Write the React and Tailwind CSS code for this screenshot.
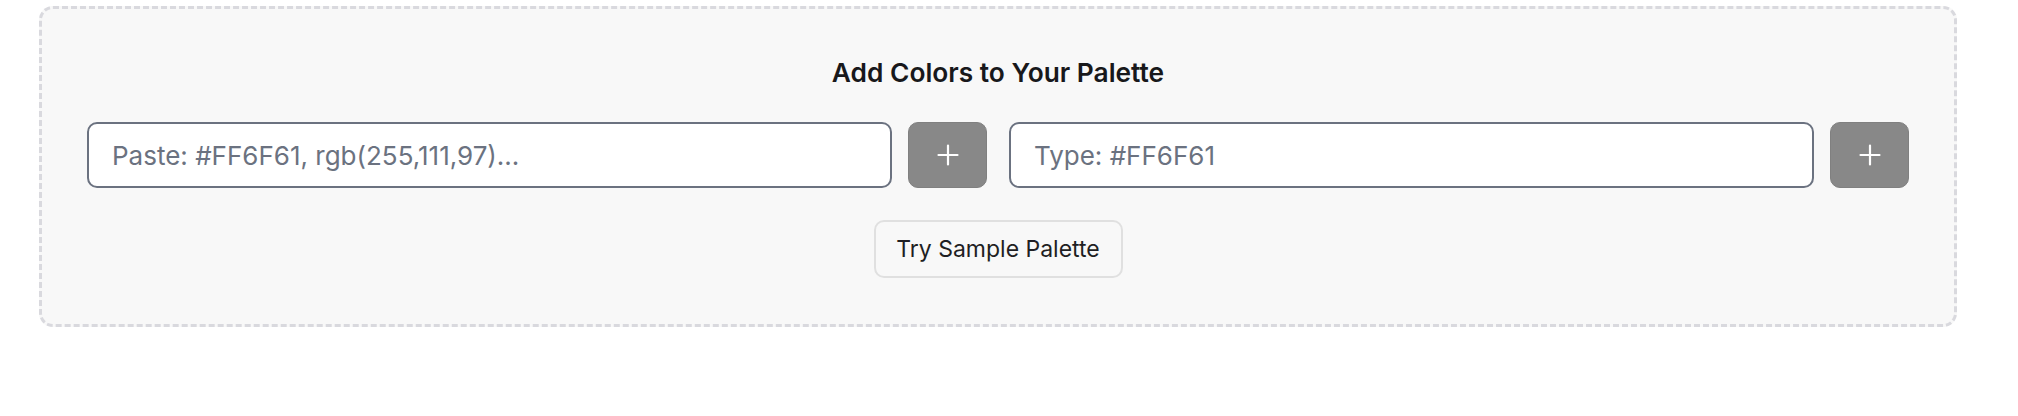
export default function App() {
  return (
    <div className="w-[2018px] h-[416px] bg-white pt-[6px] pl-[39px]" style={{ fontFamily: 'Inter, "Noto Sans", sans-serif' }}>
      <div className="w-[1918px] h-[321px] border-[3px] border-dashed border-[#d9d9de] rounded-[14px] bg-[#f8f8f8] px-[45px] pt-[48px] flex flex-col items-center">
        <h2 className="text-[26.3px] leading-[32px] font-semibold text-[#18181b]">Add Colors to Your Palette</h2>
        <div className="mt-[33px] w-full flex gap-[22px]">
          <div className="flex-1 flex gap-4">
            <input
              className="flex-1 h-[66px] bg-white border-2 border-[#6b7280] rounded-[10px] px-[23px] text-[26px] text-gray-800 placeholder:text-[#6b7280] outline-none"
              placeholder="Paste: #FF6F61, rgb(255,111,97)..."
            />
            <button className="w-[79px] h-[66px] bg-[#888888] border border-[#808080] rounded-[10px] flex items-center justify-center">
              <svg width="22" height="22" viewBox="0 0 22 22" fill="none" stroke="white" strokeWidth="2.2" strokeLinecap="round">
                <path d="M11 1.5v19M1.5 11h19" />
              </svg>
            </button>
          </div>
          <div className="flex-1 flex gap-4">
            <input
              className="flex-1 h-[66px] bg-white border-2 border-[#6b7280] rounded-[10px] px-[23px] text-[26px] text-gray-800 placeholder:text-[#6b7280] outline-none"
              placeholder="Type: #FF6F61"
            />
            <button className="w-[79px] h-[66px] bg-[#888888] border border-[#808080] rounded-[10px] flex items-center justify-center">
              <svg width="22" height="22" viewBox="0 0 22 22" fill="none" stroke="white" strokeWidth="2.2" strokeLinecap="round">
                <path d="M11 1.5v19M1.5 11h19" />
              </svg>
            </button>
          </div>
        </div>
        <button className="mt-[32px] w-[249px] h-[58px] border-2 border-[#e0e0e0] rounded-[10px] bg-[#f8f8f8] text-[23px] text-[#1f1f23] flex items-center justify-center">
          Try Sample Palette
        </button>
      </div>
    </div>
  );
}
